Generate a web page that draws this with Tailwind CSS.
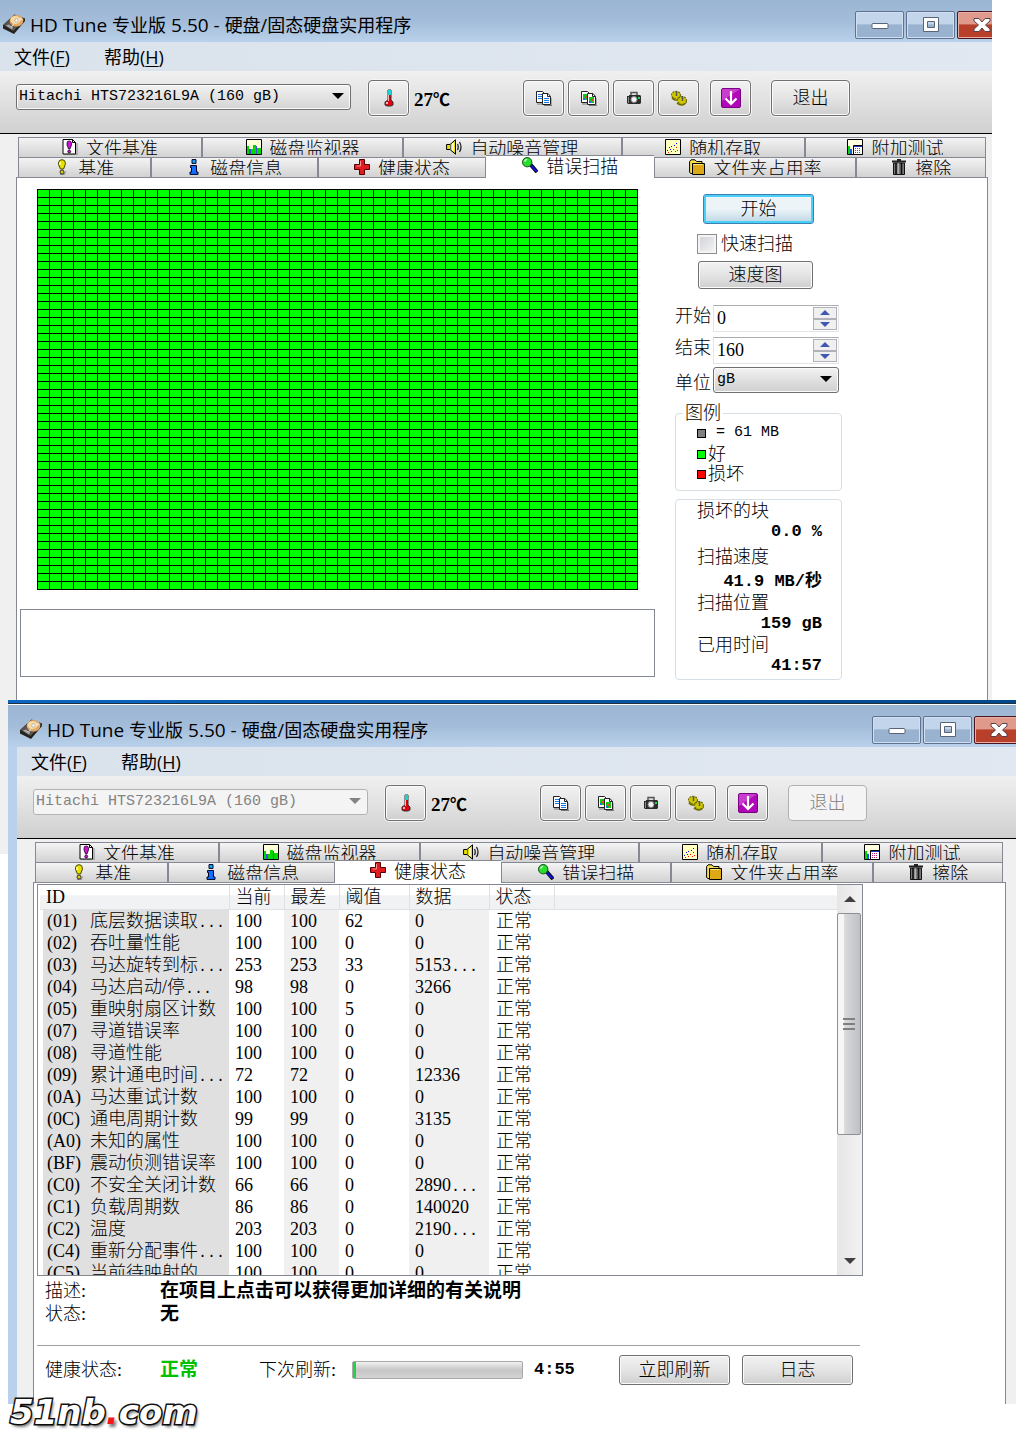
<!DOCTYPE html>
<html lang="zh-CN">

<head>
    <meta charset="UTF-8">
    <meta name="viewport" content="width=device-width, initial-scale=1.0">
    <title>HD Tune 专业版 5.50</title>
    <script src="https://cdn.jsdelivr.net/npm/@tailwindcss/browser@4"></script>
</head>

<body class="relative min-h-screen bg-white text-black text-[18px] leading-[22px] font-light font-['Liberation_Serif','Noto_Sans_CJK_SC',serif]">
    <!-- icon sprite -->
    <svg class="hidden">
        <symbol id="disk" viewBox="0 0 22 20">
            <path d="M0 11 11.500.500 22 4.500V7L11 20 0 14.500z" fill="#26221f" />
            <path d="M.500 11 11.500 1l10 4L10.500 17z" fill="#5c544e" />
            <ellipse cx="13.500" cy="6.800" rx="6.800" ry="5.800" fill="#e2a862" />
            <ellipse cx="12.500" cy="6" rx="5" ry="4" fill="#f6d9a4" />
            <path d="m13.500 6.800 5-3.500 1.500 3z" fill="#fff" opacity=".5" />
            <circle cx="13.500" cy="6.500" r="1.700" fill="#fff" stroke="#987" stroke-width=".6" />
            <path d="m3 11.500 3-1 4 3-1 2z" fill="#aaa" />
            <path d="m8.500 13 4-5" stroke="#ddd" />
        </symbol>
        <symbol id="thermo" viewBox="0 0 16 18">
            <path d="M7 1h3v10l2 2v3l-2 1H6l-2-1v-3l3-2z" fill="#e00010" stroke="#333" stroke-width="1" />
            <path d="M7 1h3v5H7z" fill="#20d0d0" />
            <path d="M7 6h1v6H7zM5 13h2v2H5z" fill="#ffb0b0" />
        </symbol>
        <symbol id="pages" viewBox="0 0 16 16">
            <path d="M1 14h6M8 15.500h8V8" fill="none" stroke="#777" />
            <path d="M.5 1.500h6l2 2v9h-8z" fill="#fff" stroke="#222" />
            <path d="M6.500 3.500h5.500l2.500 3v8h-8z" fill="#fff" stroke="#222" />
            <path d="M11.500 3.500v3h3" fill="none" stroke="#222" />
        </symbol>
        <symbol id="copy" viewBox="0 0 16 16">
            <use href="#pages" width="16" height="16" />
            <path d="M2 4.500h4M2 6.500h4M2 8.500h4M8 8.500h5M8 10.500h5M8 12.500h5" stroke="#1878e8" />
        </symbol>
        <symbol id="copyimg" viewBox="0 0 16 16">
            <use href="#pages" width="16" height="16" />
            <path d="M2 4h4v6H2zM8 7h5v6H8z" fill="#18c818" />
            <path d="M2 8h2v2H2zM8 11h2v2H8z" fill="#2468e8" />
            <path d="M4 6h2v2H4zM10 9h2v2h-2z" fill="#e84020" />
        </symbol>
        <symbol id="camera" viewBox="0 0 16 14">
            <path d="M5 4V1.500h6V4" fill="#ddd" stroke="#555" stroke-width="1.500" />
            <path d="M1 5h2V4h11l1 1v7l-1 1H2l-1-1z" fill="#2c2c2c" />
            <path d="M2 6h1v6H2z" fill="#888" />
            <circle cx="8" cy="8.500" r="3" fill="#f4f4f4" stroke="#888" />
            <path d="M12 6h2v2h-2z" fill="#1d4" />
        </symbol>
        <symbol id="gears" viewBox="0 0 16 16">
            <path d="M1 8q5 4 8 0M6 13q6 4 9-1" fill="none" stroke="#6e6900" stroke-width="2" />
            <g fill="#cfc800" stroke="#6e6900" stroke-width="1.200" stroke-dasharray="2 1">
                <ellipse cx="5" cy="5" rx="4.500" ry="3.600" />
                <ellipse cx="11" cy="10.500" rx="4.500" ry="3.800" />
            </g>
            <path d="M5.500 1v5M11.500 6v5" stroke="#555" stroke-width="1.500" />
            <path d="M2 7l4 4M4 8l3 3" stroke="#8d8700" />
        </symbol>
        <symbol id="down" viewBox="0 0 20 20">
            <rect x=".5" y=".5" width="19" height="19" rx="1.500" fill="#b008b8" stroke="#7a0082" />
            <path d="M1 1h18L1 13z" fill="#d860dc" opacity=".6" />
            <path d="M10 3v12M4.500 10.500 10 16l5.500-5.500" fill="none" stroke="#fff" stroke-width="2.200" />
        </symbol>
        <symbol id="filebench" viewBox="0 0 16 16">
            <path d="M2 16h13V4" fill="none" stroke="#888" />
            <path d="M1 .500h9.500l3 3V15H1z" fill="#fff" stroke="#000" />
            <path d="M10.500.500v3h3" fill="none" stroke="#000" />
            <path d="M5 4q0-2 2.200-2T9.500 4v2L8 10H6.500L5 6z" fill="#d010d8" stroke="#000" stroke-width=".7" />
            <circle cx="7.200" cy="12.500" r="1.500" fill="#d010d8" stroke="#000" stroke-width=".7" />
        </symbol>
        <symbol id="monitor" viewBox="0 0 16 16">
            <path d="M.5.500h15v15H.5z" fill="#ffffd8" stroke="#000" />
            <path d="M1 7h2v8H1zM5 10h2v5H5zM7 6h3v9H7zM12 9h3v6h-3z" fill="#00d800" />
            <path d="M3 10h2v5H3zM10 7h1v8h-1z" fill="#4048e8" />
            <path d="M11 9h1v6h-1z" fill="#00d800" />
        </symbol>
        <symbol id="sound" viewBox="0 0 16 16">
            <path d="M.6 5.500h3.400L9.500.800v14.400L4 10.500H.6z" fill="#e8e000" stroke="#000" />
            <path d="M4.500 5.500v5" stroke="#666" />
            <path d="M7 4v8" stroke="#fff" stroke-width="1.500" />
            <path d="M11.500 5q1.500 3 0 6M13.500 3q3 5 0 10" fill="none" stroke="#222" stroke-width="1.300" />
        </symbol>
        <symbol id="random" viewBox="0 0 16 16">
            <path d="M.5.500h15v15H.5z" fill="#ffffc0" stroke="#000" />
            <path d="M2 11h1v1H2zM4 8h1v1H4zM6 7h1v1H6zM9 6h1v1H9zM11 4h1v1h-1zM5 10h1v1H5z" fill="#00f" />
            <path d="M3 13h1v1H3zM6 12h1v1H6zM8 10h1v1H8zM10 12h1v1h-1zM11 8h1v1h-1zM12 11h1v1h-1z" fill="#f00" />
        </symbol>
        <symbol id="extra" viewBox="0 0 16 16">
            <path d="M.5.500h15v15H.5z" fill="#ffffe0" stroke="#000" />
            <path d="M1 7h2v8H1z" fill="#00d800" />
            <path d="M3 10h2v5H3z" fill="#2050ff" />
            <path d="M6.500 6.500h9v9h-9z" fill="#fff" stroke="#000" />
            <path d="M7 7h8v1H7z" fill="#2030c0" />
            <path d="M8 9.500h6M8 11.500h6M8 13.500h6" stroke="#c02080" stroke-dasharray="1 1" />
        </symbol>
        <symbol id="bulb" viewBox="0 0 16 16">
            <path d="M6 15.500h4.500l1-3" stroke="#888" fill="none" />
            <path d="M4.500 3.500Q5 .700 8 .700t3.300 2.800v2L9.500 10h-3l-2-4.500z" fill="#e8e000" stroke="#444400" />
            <path d="M6 3v3" stroke="#ffffb0" stroke-width="1.500" />
            <circle cx="8" cy="13" r="2" fill="#d8d000" stroke="#333" />
        </symbol>
        <symbol id="info" viewBox="0 0 16 16">
            <path d="M6 .600h4v3.800H6z" fill="#18a8ff" stroke="#002" />
            <path d="M4.500 6.500h6v6.500h1.500v2.400h-8V13h1.500V8.500H4.500z" fill="#1070ff" stroke="#002" />
        </symbol>
        <symbol id="cross" viewBox="0 0 16 16">
            <path d="M5.500.500h5v5h5v5h-5v5h-5v-5h-5v-5h5z" fill="#e01c20" stroke="#500" />
            <path d="M6.500 2v5h-4" fill="none" stroke="#ff8c8c" />
        </symbol>
        <symbol id="magnify" viewBox="0 0 17 17">
            <path d="m9 8 7 8" stroke="#000" stroke-width="4" />
            <path d="m9.500 9 6 6.500" stroke="#1010d8" stroke-width="2.400" />
            <circle cx="5.500" cy="5.500" r="5" fill="#28dc30" stroke="#104810" />
            <path d="M3 5q0-2 2.500-2.500" stroke="#d0ffd0" stroke-width="1.500" fill="none" />
        </symbol>
        <symbol id="folder" viewBox="0 0 16 16">
            <path d="M.6 13.500V2.500L2 .800h4l1.500 1.700H13v12H2z" fill="#f4e050" stroke="#000" />
            <path d="M3.500 4.500h12v11h-12z" fill="#dca818" stroke="#000" />
            <path d="M4.500 5.500h9" stroke="#ffe880" />
        </symbol>
        <symbol id="trash" viewBox="0 0 16 16">
            <path d="M1 1.500h14v2H1zM6 0h4v2H6z" fill="#222" />
            <path d="M2.500 4h11v11.500h-11z" fill="#777" stroke="#111" />
            <path d="M5 4v11M10.500 4v11" stroke="#111" stroke-width="1.600" />
            <path d="M7.200 4v11" stroke="#ccc" />
        </symbol>
        <symbol id="tri" viewBox="0 0 12 6">
            <path d="M0 0h12L6 6z" fill="currentColor" />
        </symbol>
        <symbol id="triup" viewBox="0 0 12 6">
            <path d="M0 6h12L6 0z" fill="currentColor" />
        </symbol>
        <symbol id="win-min" viewBox="0 0 18 18">
            <rect x="1" y="7.500" width="16" height="5" rx="1" fill="#fff" stroke="#5a6478" />
        </symbol>
        <symbol id="win-max" viewBox="0 0 18 18">
            <path d="M1.500 1.500h15v14h-15zM5.500 5.500v6h7v-6z" fill="#fff" fill-rule="evenodd" stroke="#5a6478" />
        </symbol>
        <symbol id="win-close" viewBox="0 0 18 18">
            <path d="m1 2.500h5L9 6l3-3.500h5V5l-4.500 4 4.500 4v2.500h-5L9 12l-3 3.500H1V13l4.500-4L1 5z" fill="#fff" stroke="#5a4048" />
        </symbol>
    </svg>

    <!-- error scan window -->
    <section class="mr-6 bg-[#f0f0f0]">
        <div data-head="scan"></div>
        <div data-tabs="scan"></div>
        <div class="ml-4 mr-1 flex items-start border-x border-t border-[#868894] bg-white pb-5">
            <div class="ml-[3px] mt-[11px] w-[635px]">
                <div class="ml-[17px] h-[401px] w-[601px] bg-[#00ff00] bg-[linear-gradient(#000_1px,transparent_1px),linear-gradient(90deg,#000_1px,transparent_1px)] bg-[length:12px_8px]"></div>
                <div class="mt-[19px] h-[68px] border border-[#828790]"></div>
            </div>
            <div class="ml-5 mt-4 flex w-[167px] flex-col">
                <button class="ml-7 h-[30px] w-[111px] rounded-[3px] border border-[#3c7fb1] bg-linear-to-b from-[#ecf4f8] from-50% to-[#bcd6e4] to-100% shadow-[inset_0_0_0_2px_#48d0f8]">开始</button>
                <label class="ml-[22px] mt-[9px] flex h-[22px] items-center gap-1">
                    <input type="checkbox" class="size-5 appearance-none border border-[#8e8f8f] bg-linear-to-br from-[#cdd0d8] to-[#f6f6f6] shadow-[inset_0_0_0_2px_#f4f4f4]">快速扫描
                </label>
                <button class="ml-[23px] mt-[6px] h-7 w-[115px] rounded-[3px] border border-[#707070] bg-linear-to-b from-[#f2f2f2] via-[#e4e4e4] to-[#cfcfcf] shadow-[inset_0_0_0_1px_#fbfbfb]">速度图</button>
                <div class="mt-4 flex flex-col gap-[5px]">
                    <div class="flex h-[27px]">
                        <label for="from" class="w-[38px]">开始</label>
                        <div class="flex w-[126px] border border-[#e3e3ea] border-t-[#abadb3] p-px">
                            <input id="from" type="text" value="0" class="min-w-0 flex-1 pl-[2px] pb-[2px]">
                            <div class="flex w-6 flex-col text-[#4058b0]">
                                <button aria-label="增加" class="flex flex-1 items-center justify-center border border-[#b0b2b8] bg-[#f0f0f0]"><svg class="h-[5px] w-[10px]"><use href="#triup" /></svg></button>
                                <button aria-label="减少" class="flex flex-1 items-center justify-center border border-[#b0b2b8] bg-[#f0f0f0]"><svg class="h-[5px] w-[10px]"><use href="#tri" /></svg></button>
                            </div>
                        </div>
                    </div>
                    <div class="flex h-[27px]">
                        <label for="to" class="w-[38px]">结束</label>
                        <div class="flex w-[126px] border border-[#e3e3ea] border-t-[#abadb3] p-px">
                            <input id="to" type="text" value="160" class="min-w-0 flex-1 pl-[2px] pb-[2px]">
                            <div class="flex w-6 flex-col text-[#4058b0]">
                                <button aria-label="增加" class="flex flex-1 items-center justify-center border border-[#b0b2b8] bg-[#f0f0f0]"><svg class="h-[5px] w-[10px]"><use href="#triup" /></svg></button>
                                <button aria-label="减少" class="flex flex-1 items-center justify-center border border-[#b0b2b8] bg-[#f0f0f0]"><svg class="h-[5px] w-[10px]"><use href="#tri" /></svg></button>
                            </div>
                        </div>
                    </div>
                </div>
                <div class="mt-[2px] flex h-[26px]">
                    <label for="unit" class="w-[38px] pt-[6px]">单位</label>
                    <div class="relative w-[126px]">
                        <select id="unit" class="h-full w-full appearance-none rounded-[3px] border border-[#707070] bg-linear-to-b from-[#f2f2f2] to-[#cfcfcf] pl-[3px] font-['Liberation_Mono',monospace] text-[15px] shadow-[inset_0_0_0_1px_#fbfbfb]">
                            <option>gB</option>
                        </select>
                        <svg class="pointer-events-none absolute right-[7px] top-[10px] h-[6px] w-3"><use href="#tri" /></svg>
                    </div>
                </div>
                <fieldset class="mt-[10px] h-[89px] rounded-[4px] border border-[#d5dfe5] pl-[21px]">
                    <legend class="-ml-[14px] px-[2px]">图例</legend>
                    <div class="-mt-[2px] flex items-center gap-[10px] font-['Liberation_Mono',monospace] text-[15px]"><i class="size-[9px] border border-black bg-[#808080]"></i>= 61 MB</div>
                    <div class="flex h-5 items-center gap-[2px]"><i class="size-[9px] border border-black bg-[#00ff00]"></i>好</div>
                    <div class="flex h-5 items-center gap-[2px]"><i class="size-[9px] border border-black bg-[#ff0000]"></i>损坏</div>
                </fieldset>
                <dl class="mt-2 h-[181px] rounded-[4px] border border-[#d5dfe5] pl-[21px] pr-[19px] [&_dt]:h-[21px] [&_dd]:h-[21px] [&_dd]:text-right [&_dd]:font-bold [&_dd]:font-['Liberation_Mono','Noto_Sans_CJK_SC',monospace] [&_dd]:text-[17px]">
                    <dt>损坏的块</dt>
                    <dd>0.0 %</dd>
                    <dt class="mt-1">扫描速度</dt>
                    <dd class="mt-1">41.9 MB/秒</dd>
                    <dt>扫描位置</dt>
                    <dd>159 gB</dd>
                    <dt>已用时间</dt>
                    <dd>41:57</dd>
                </dl>
            </div>
        </div>
    </section>

    <div class="flex items-start">
        <div class="h-[154px] w-2 shrink-0 bg-[#f0f0f0]"></div>
        <!-- health window -->
        <section class="min-w-0 flex-1 bg-[#b9d1ea]">
            <div class="h-[3px] bg-linear-to-r from-[#0a66c4] to-[#04488c]"></div>
            <div class="h-px bg-[#20303c]"></div>
            <div class="h-px bg-white"></div>
            <div data-head="health"></div>
            <div class="ml-[9px] bg-[#f0f0f0]">
                <div class="pr-[7px]">
                    <div data-tabs="health"></div>
                </div>
                <div class="ml-4 mr-[10px] border-x border-t border-[#868894] bg-white pb-[19px] pl-[3px] pt-px">
                    <div class="flex h-[392px] w-[826px] border border-[#828790] pl-[2px]">
                        <div class="flex-1 overflow-hidden">
                            <table class="w-full table-fixed border-collapse text-left">
                                <colgroup>
                                    <col class="w-[189px]">
                                    <col class="w-[55px]">
                                    <col class="w-[55px]">
                                    <col class="w-[70px]">
                                    <col class="w-[80px]">
                                    <col class="w-[65px]">
                                    <col>
                                </colgroup>
                                <thead>
                                    <tr class="h-6 bg-linear-to-b from-white from-40% to-[#f1f2f4] to-45% [&_th]:border-b [&_th]:border-r [&_th]:border-[#dfe1e4] [&_th]:p-0 [&_th]:pl-[6px] [&_th]:font-light">
                                        <th>ID</th>
                                        <th>当前</th>
                                        <th>最差</th>
                                        <th>阈值</th>
                                        <th>数据</th>
                                        <th>状态</th>
                                        <th class="border-r-0!"></th>
                                    </tr>
                                </thead>
                                <tbody id="attrs"></tbody>
                            </table>
                        </div>
                        <div class="flex w-[25px] flex-col bg-linear-to-r from-[#e6e6e6] to-[#f2f2f2] text-[#404040]">
                            <button aria-label="向上" class="flex h-7 w-full items-center justify-center"><svg class="h-[6px] w-3"><use href="#triup" /></svg></button>
                            <div class="flex h-[222px] w-6 flex-col items-center justify-center gap-[3px] rounded-[2px] border border-[#909090] bg-linear-to-r from-[#f6f6f6] from-25% via-[#d9dadc] via-30% to-[#bfc0c4]">
                                <i class="h-[2px] w-3 bg-[#808080]"></i>
                                <i class="h-[2px] w-3 bg-[#808080]"></i>
                                <i class="h-[2px] w-3 bg-[#808080]"></i>
                            </div>
                            <button aria-label="向下" class="mt-auto flex h-7 w-full items-center justify-center"><svg class="h-[6px] w-3"><use href="#tri" /></svg></button>
                        </div>
                    </div>
                    <dl class="grid grid-cols-[115px_1fr] gap-y-px pl-2 pt-1">
                        <dt>描述:</dt>
                        <dd class="text-[19px] font-bold">在项目上点击可以获得更加详细的有关说明</dd>
                        <dt>状态:</dt>
                        <dd class="text-[19px] font-bold">无</dd>
                    </dl>
                    <hr class="mt-5 w-[823px] border-[#a0a0a0]">
                    <div class="mt-[9px] flex h-[30px] items-center pl-2">
                        <span class="w-[115px]">健康状态:</span>
                        <span class="w-[99px] text-[19px] font-bold text-[#00c000]">正常</span>
                        <span class="w-[93px]">下次刷新:</span>
                        <div role="progressbar" aria-label="下次刷新" class="h-[18px] w-[171px] rounded-[2px] border border-[#a8a8a8] bg-linear-to-b from-[#f2f2f2] via-[#c6c6c6] to-[#d4d4d4]">
                            <div class="h-full bg-[#28d048]" style="width:2%"></div>
                        </div>
                        <span class="ml-[11px] w-[85px] font-['Liberation_Mono',monospace] text-[17px] font-bold">4:55</span>
                        <button class="h-[30px] w-[111px] rounded-[3px] border border-[#707070] bg-linear-to-b from-[#f2f2f2] via-[#e4e4e4] to-[#cfcfcf] shadow-[inset_0_0_0_1px_#fbfbfb]">立即刷新</button>
                        <button class="ml-3 h-[30px] w-[111px] rounded-[3px] border border-[#707070] bg-linear-to-b from-[#f2f2f2] via-[#e4e4e4] to-[#cfcfcf] shadow-[inset_0_0_0_1px_#fbfbfb]">日志</button>
                    </div>
                </div>
            </div>
        </section>
    </div>
    <div class="h-8"></div>

    <!-- watermark -->
    <div class="absolute bottom-1 left-[10px] font-['DejaVu_Sans',sans-serif] text-[34px] leading-10 font-bold italic text-white [-webkit-text-stroke:3px_#111] [paint-order:stroke_fill] [text-shadow:2px_3px_3px_#0008]">51nb<span class="text-[#f01818] [-webkit-text-stroke:0]">.</span>com</div>

    <script>
        const icon = (id, cls) => `<svg class="${cls}"><use href="#${id}" /></svg>`;
        const btn = 'flex h-9 shrink-0 items-center justify-center rounded-[4px] border border-[#707070] bg-linear-to-b from-[#f2f2f2] via-[#e4e4e4] to-[#cfcfcf] shadow-[0_0_0_1px_#f4f4f4,inset_0_0_0_1px_#fbfbfb]';
        const caption = 'flex h-7 w-[49px] shrink-0 items-center justify-center rounded-[2px] border border-[#5f7290] bg-linear-to-b from-[#c2d5ea] from-45% to-[#98b2cf] to-50% shadow-[inset_0_0_0_1px_#d0e0f0]';

        // title bar, menu and toolbar
        document.querySelectorAll('[data-head]').forEach(el => {
            const health = el.dataset.head === 'health';
            el.innerHTML = `
            <header class="flex h-[42px] overflow-hidden bg-linear-to-b from-[#9ab5d2] via-[#a3bcd9] to-[#b9d1ea] font-['Open_Sans','Noto_Sans_CJK_SC',sans-serif] font-normal ${health ? 'pl-3' : 'pl-[3px]'}">
                ${icon('disk', 'mt-[14px] h-5 w-[22px] shrink-0')}
                <h1 class="ml-[5px] mt-[14px] whitespace-nowrap"><span class="text-[19px]">HD Tune </span>专业版<span class="text-[19px]"> 5.50 - </span>硬盘/固态硬盘实用程序</h1>
                <div class="ml-auto mt-[11px] flex gap-[2px] ${health ? '-mr-[7px]' : '-mr-[14px]'}">
                    <button aria-label="最小化" class="${caption}">${icon('win-min', 'size-[18px]')}</button>
                    <button aria-label="最大化" class="${caption}">${icon('win-max', 'size-[18px]')}</button>
                    <button aria-label="关闭" class="flex h-7 w-[49px] shrink-0 items-center justify-center rounded-[2px] border border-[#4a1420] bg-linear-to-b from-[#e09a8c] from-45% to-[#b8402a] to-50% shadow-[inset_0_0_0_1px_#e8b0a4]">${icon('win-close', 'size-[18px]')}</button>
                </div>
            </header>
            <div class="${health ? 'ml-[9px]' : ''}">
                <nav class="flex h-[29px] items-center bg-linear-to-r from-[#dae2ec] to-[#e1e8f1] pl-[14px] font-['Open_Sans','Noto_Sans_CJK_SC',sans-serif] font-normal">
                    <a href="#" class="w-[90px]">文件(<u class="underline-offset-2">F</u>)</a>
                    <a href="#">帮助(<u class="underline-offset-2">H</u>)</a>
                </nav>
                <div class="flex h-[63px] items-start border-b border-black bg-linear-to-b from-[#f0f0f0] to-[#d0d0d0] pl-4 pt-[9px]">
                    <div class="relative mt-[3px] w-[335px] ${health ? 'text-[#838383]' : ''}">
                        <select aria-label="硬盘" ${health ? 'disabled' : ''} class="h-[26px] w-full appearance-none rounded-[3px] border pl-[2px] font-['Liberation_Mono',monospace] text-[15px] font-normal opacity-100 ${health ? 'border-[#b0b4b6] bg-[#f4f4f4]' : 'border-[#707070] bg-linear-to-b from-[#f2f2f2] to-[#d4d4d4] shadow-[inset_0_0_0_1px_#fbfbfb]'}">
                            <option>Hitachi HTS723216L9A (160 gB)</option>
                        </select>
                        ${icon('tri', 'pointer-events-none absolute right-[7px] top-[10px] h-[6px] w-3')}
                    </div>
                    <button aria-label="温度" class="${btn} ml-[17px] w-[41px]">${icon('thermo', 'h-[18px] w-4')}</button>
                    <span class="ml-[5px] w-[109px] pt-2 text-[19px] font-bold">27<span class="font-['Noto_Sans_CJK_SC',sans-serif] text-[17px]">℃</span></span>
                    <div class="flex gap-1">
                        <button aria-label="复制文本" class="${btn} w-[41px]">${icon('copy', 'size-4')}</button>
                        <button aria-label="复制图像" class="${btn} w-[41px]">${icon('copyimg', 'size-4')}</button>
                        <button aria-label="截图" class="${btn} w-[41px]">${icon('camera', 'h-[14px] w-4')}</button>
                        <button aria-label="选项" class="${btn} w-[41px]">${icon('gears', 'size-4')}</button>
                    </div>
                    <button aria-label="保存" class="${btn} ml-[11px] w-[41px]">${icon('down', 'size-5')}</button>
                    ${health
                    ? '<button disabled class="ml-5 h-9 w-[79px] rounded-[4px] border border-[#adb2b5] bg-[#f4f4f4] text-[#838383]">退出</button>'
                    : `<button class="${btn} ml-5 w-[79px]">退出</button>`}
                </div>
            </div>`;
        });

        // two rows of tabs: [icon, label, width class]
        const backRow = [
            ['filebench', '文件基准', 'flex-[184]'],
            ['monitor', '磁盘监视器', 'flex-[201]'],
            ['sound', '自动噪音管理', 'flex-[219]'],
            ['random', '随机存取', 'flex-[183]'],
            ['extra', '附加测试', 'flex-[181]'],
        ];
        const frontRow = [
            ['bulb', '基准', 'flex-[132]'],
            ['info', '磁盘信息', 'flex-[167]'],
            ['cross', '健康状态', 'flex-[168]', 'health'],
            ['magnify', '错误扫描', 'flex-[170]', 'scan'],
            ['folder', '文件夹占用率', 'flex-[202]'],
            ['trash', '擦除', 'flex-[129]'],
        ];
        const tab = ([id, label, width, key], current) => key && key === current
            ? `<button role="tab" aria-selected="true" class="${width} relative z-10 -mt-[2px] -mb-px flex min-w-0 items-start justify-center gap-2 overflow-hidden border-t border-[#868894] bg-white">
                    ${icon(id, 'mt-px size-4 shrink-0')}<span class="whitespace-nowrap">${label}</span></button>`
            : `<button role="tab" class="${width} flex min-w-0 items-start justify-center gap-2 overflow-hidden border-x border-t border-[#868894] bg-linear-to-b from-[#f4f4f4] to-[#d2d2d2]">
                    ${icon(id, 'mt-px size-4 shrink-0')}<span class="h-[17px] overflow-hidden whitespace-nowrap">${label}</span></button>`;

        document.querySelectorAll('[data-tabs]').forEach(el => {
            el.innerHTML = `<div role="tablist" class="pl-[18px] pr-[6px] pt-[3px]">
                <div class="flex h-5">${backRow.map(t => tab(t)).join('')}</div>
                <div class="flex h-5">${frontRow.map(t => tab(t, el.dataset.tabs)).join('')}</div>
            </div>`;
        });

        // SMART attributes
        const attrs = [
            ['01', '底层数据读取...', 100, 100, 62, '0'],
            ['02', '吞吐量性能', 100, 100, 0, '0'],
            ['03', '马达旋转到标...', 253, 253, 33, '5153...'],
            ['04', '马达启动/停...', 98, 98, 0, '3266'],
            ['05', '重映射扇区计数', 100, 100, 5, '0'],
            ['07', '寻道错误率', 100, 100, 0, '0'],
            ['08', '寻道性能', 100, 100, 0, '0'],
            ['09', '累计通电时间...', 72, 72, 0, '12336'],
            ['0A', '马达重试计数', 100, 100, 0, '0'],
            ['0C', '通电周期计数', 99, 99, 0, '3135'],
            ['A0', '未知的属性', 100, 100, 0, '0'],
            ['BF', '震动侦测错误率', 100, 100, 0, '0'],
            ['C0', '不安全关闭计数', 66, 66, 0, '2890...'],
            ['C1', '负载周期数', 86, 86, 0, '140020'],
            ['C2', '温度', 203, 203, 0, '2190...'],
            ['C4', '重新分配事件...', 100, 100, 0, '0'],
            ['C5', '当前待映射的', 100, 100, 0, '0'],
        ];
        const dots = text => text.replace('...', `<span class="font-['Liberation_Mono',monospace] text-[15px]">...</span>`);
        document.getElementById('attrs').innerHTML = attrs.map(([id, name, cur, worst, limit, data]) => `
            <tr class="h-[22px] [&_td]:p-0">
                <td><div class="ml-[3px] flex h-[22px] bg-[#e0e0e0] pl-1"><span class="w-[43px]">(${id})</span><span>${dots(name)}</span></div></td>
                <td class="pl-[6px]!">${cur}</td>
                <td class="bg-[#f0f0f0] pl-[6px]!">${worst}</td>
                <td class="pl-[6px]!">${limit}</td>
                <td class="bg-[#f0f0f0] pl-[6px]!"><div class="h-[22px]">${dots(data)}</div></td>
                <td class="pl-[7px]!">正常</td>
                <td></td>
            </tr>`).join('');
    </script>
</body>

</html>
